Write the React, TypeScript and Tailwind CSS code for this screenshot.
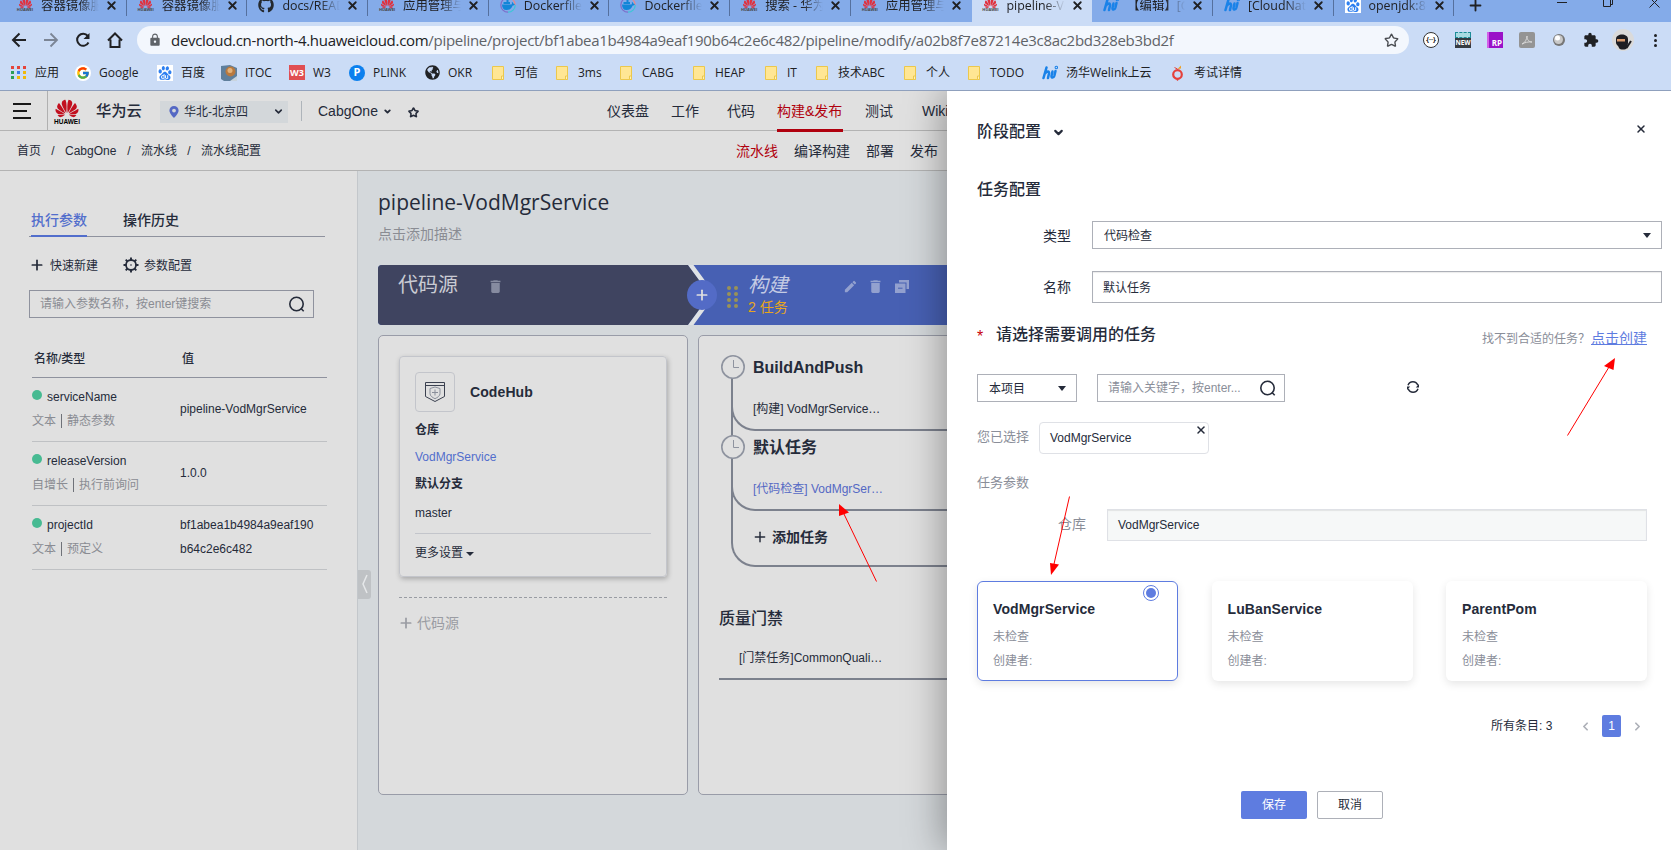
import type { ReactNode } from 'react';
import { ChevronDown, ChevronLeft, ChevronRight, Plus, Star, X } from 'lucide-react';
import { FcGoogle } from 'react-icons/fc';
import { FaGithub, FaGlobeAmericas } from 'react-icons/fa';
import { MdDelete, MdEdit, MdExtension, MdLock } from 'react-icons/md';
import { SiBaidu, SiHuawei } from 'react-icons/si';

/* ---------- small icons ---------- */

function HuaweiMark() {
  return (
    <span className="flex w-4 flex-col items-center">
      <SiHuawei className="h-[13px] w-[15px] text-[#e0313e]" />
      <span className="-mt-[2px] text-[4px] leading-[4px] font-bold text-[#444]">HUAWEI</span>
    </span>
  );
}

function DockerMark() {
  return (
    <svg className="h-4 w-4" viewBox="0 0 16 16" fill="none">
      <path d="M8 .8A7.200 7.200 0 0 0 8 15.200" stroke="#7d6fc9" strokeWidth="1.200" />
      <path d="M8 .8A7.200 7.200 0 0 1 15.200 8" stroke="#e88a8a" strokeWidth="1.200" />
      <path d="M15.200 8A7.200 7.200 0 0 1 8 15.200" stroke="#3cc6d6" strokeWidth="1.200" />
      <path d="M2 7.500h9.500c.6-.3.6-1.500.3-2.500 1 .3 1.500 1 1.600 1.800.6 0 1.100.1 1.500.4-.4.900-1.300 1.200-2.200 1.200C11.500 11.500 9.500 13 6.500 13 3.500 13 2 11 2 7.500z" fill="#1286d8" />
      <path d="M3.500 5h6.500v2H3.500zM6.500 3h2v2h-2z" fill="#1286d8" />
    </svg>
  );
}

function WelinkMark() {
  return (
    <svg className="h-4 w-4" viewBox="0 0 16 16" fill="none" stroke="#1a82e8" strokeWidth="2.500" strokeLinecap="round">
      <path d="M4.500 2.500L1.500 13M3.500 8c1.500-2 4-2 3.500.5L6 13" />
      <path d="M10.500 6.500L9.500 11c-.3 2 2.200 2 2.800 0l1.200-5" />
      <circle cx="14.300" cy="2.500" r=".5" />
    </svg>
  );
}

function BaiduMark() {
  return (
    <span className="flex h-4 w-4 items-center justify-center bg-white">
      <SiBaidu className="h-[14px] w-[14px] text-[#2d7ff0]" />
    </span>
  );
}

function Folder() {
  return (
    <svg className="h-4 w-4" viewBox="0 0 16 16">
      <path d="M2.500 1.500h11v13h-11z" fill="#ffe694" stroke="#ecc84c" />
      <path d="M11.500 11v3.500h2V11z" fill="#fff0b8" stroke="#ecc84c" />
    </svg>
  );
}

function AppsGrid() {
  const colors = ['#e5443a', '#e5443a', '#e5443a', '#2c9e56', '#3a7de8', '#f0b90b', '#2c9e56', '#f0b90b', '#f0b90b'];
  return (
    <span className="grid h-4 w-4 grid-cols-3 place-content-center gap-[2px]">
      {colors.map((c, i) => (
        <span key={i} className="h-[3px] w-[3px]" style={{ background: c }} />
      ))}
    </span>
  );
}

function SearchIcon() {
  return (
    <svg className="h-4 w-4" viewBox="0 0 16 16" fill="none" stroke="currentColor" strokeWidth="1.600">
      <circle cx="7.500" cy="8" r="6.700" />
      <path d="M11.800 12.300l2.900 2.900" />
    </svg>
  );
}

function Gear() {
  return (
    <svg className="h-4 w-4" viewBox="0 0 16 16" fill="none" stroke="currentColor">
      <circle cx="8" cy="8" r="5" strokeWidth="1.800" />
      <path
        d="M8 .5V3M8 13v2.500M.5 8H3M13 8h2.500M2.700 2.700l1.800 1.800M11.500 11.500l1.800 1.800M2.700 13.300l1.800-1.800M11.500 4.500l1.800-1.800"
        strokeWidth="1.900"
      />
      <circle cx="8" cy="8" r=".8" fill="currentColor" stroke="none" />
    </svg>
  );
}

function Caret() {
  return (
    <svg className="h-[5px] w-2" viewBox="0 0 8 5">
      <path d="M0 0h8L4 5z" fill="#252b3a" />
    </svg>
  );
}

function Clock() {
  return (
    <svg className="h-6 w-6" viewBox="0 0 24 24" fill="#e0e0e0" stroke="#8e939f">
      <circle cx="12" cy="12" r="11.200" strokeWidth="1.600" />
      <path d="M12.500 5v7.500h5.500" fill="none" />
    </svg>
  );
}

function CopyStage() {
  return (
    <svg className="h-[13px] w-[14px]" viewBox="0 0 14 13" fill="currentColor">
      <path d="M4 0h10v9h-2.500V2.500H4z" />
      <path d="M0 3.500h10.500V13H0z" />
      <path d="M3 8.200h4.500" stroke="#4760b3" />
    </svg>
  );
}

/* ---------- browser chrome ---------- */

interface Tab {
  icon: ReactNode;
  title: string;
  active?: boolean;
  noLine?: boolean;
}

const TABS: Tab[] = [
  { icon: <HuaweiMark />, title: '容器镜像服务' },
  { icon: <HuaweiMark />, title: '容器镜像服务' },
  { icon: <FaGithub className="h-4 w-4 text-[#24292f]" />, title: 'docs/README' },
  { icon: <HuaweiMark />, title: '应用管理与运维' },
  { icon: <DockerMark />, title: 'Dockerfile' },
  { icon: <DockerMark />, title: 'Dockerfile' },
  { icon: <HuaweiMark />, title: '搜索 - 华为云' },
  { icon: <HuaweiMark />, title: '应用管理与运维', noLine: true },
  { icon: <HuaweiMark />, title: 'pipeline-Vod', active: true, noLine: true },
  { icon: <WelinkMark />, title: '【编辑】[Cloud' },
  { icon: <WelinkMark />, title: '[CloudNative' },
  { icon: <BaiduMark />, title: 'openjdk:8-jre' },
];

const BOOKMARKS: { icon: ReactNode; label: string; width: string }[] = [
  { icon: <AppsGrid />, label: '应用', width: 'w-6' },
  {
    icon: (
      <span className="flex h-4 w-4 items-center justify-center rounded-full bg-white">
        <FcGoogle className="h-[14px] w-[14px]" />
      </span>
    ),
    label: 'Google',
    width: 'w-[42px]',
  },
  { icon: <BaiduMark />, label: '百度', width: 'w-6' },
  {
    icon: (
      <svg className="h-4 w-4" viewBox="0 0 16 16">
        <path d="M0 1l9-1 7 3v13H3L0 14z" fill="#5f7f9c" />
        <path d="M9 16l7-5v5z" fill="#c9d4de" />
        <circle cx="9.500" cy="6.500" r="5" fill="#b9793e" />
        <circle cx="9" cy="5.500" r="2.500" fill="#e3b27a" />
      </svg>
    ),
    label: 'ITOC',
    width: 'w-7',
  },
  {
    icon: (
      <span className="flex h-[15px] w-4 items-center justify-center bg-[#e04e52] text-[9px] font-bold text-white">W3</span>
    ),
    label: 'W3',
    width: 'w-5',
  },
  {
    icon: (
      <span className="flex h-4 w-4 items-center justify-center rounded-full bg-[#0c80ee] text-[11px] font-bold text-white">
        P
      </span>
    ),
    label: 'PLINK',
    width: 'w-[35px]',
  },
  { icon: <FaGlobeAmericas className="h-[15px] w-[15px] text-[#202124]" />, label: 'OKR', width: 'w-[26px]' },
  { icon: <Folder />, label: '可信', width: 'w-6' },
  { icon: <Folder />, label: '3ms', width: 'w-6' },
  { icon: <Folder />, label: 'CABG', width: 'w-[33px]' },
  { icon: <Folder />, label: 'HEAP', width: 'w-8' },
  { icon: <Folder />, label: 'IT', width: 'w-[11px]' },
  { icon: <Folder />, label: '技术ABC', width: 'w-12' },
  { icon: <Folder />, label: '个人', width: 'w-6' },
  { icon: <Folder />, label: 'TODO', width: 'w-9' },
  { icon: <WelinkMark />, label: '汤华Welink上云', width: 'w-[88px]' },
  {
    icon: (
      <svg className="h-4 w-4" viewBox="0 0 16 16" fill="none">
        <circle cx="7.500" cy="9.500" r="4.300" stroke="#e5403b" strokeWidth="2.200" />
        <path d="M6 14.500L7.500 16 9 14.500" fill="#e5403b" />
        <path d="M7.500 4L11 .5v3z" fill="#f0a020" />
        <path d="M4.500 2.500L7.500 4" stroke="#e5403b" />
      </svg>
    ),
    label: '考试详情',
    width: 'w-12',
  },
];

function TabStrip() {
  return (
    <div className="flex h-[22px] items-start overflow-hidden bg-[#84abe9] pl-[6px]">
      {TABS.map((t, i) => (
        <div
          key={i}
          className={`flex h-[22px] w-[120.7px] shrink-0 items-start pl-[11px] ${t.active ? 'bg-[#cbdcf6]' : 'bg-[#84abe9]'} ${
            i === 7 ? 'rounded-br-lg' : ''
          } ${i === 9 ? 'rounded-bl-lg' : ''}`}
        >
          <span className="-mt-[3px] h-4 w-4 shrink-0">{t.icon}</span>
          <span
            className="-mt-[4px] ml-2 w-[58px] overflow-hidden whitespace-nowrap text-[12.4px] leading-5 text-[#202124] [mask-image:linear-gradient(to_right,black_65%,transparent)]"
          >
            {t.title}
          </span>
          <X className="-mt-[1px] ml-[6px] h-[13px] w-[13px] shrink-0 text-[#202124]" strokeWidth={3.4} />
          <span className={`ml-auto h-4 w-px ${t.noLine ? '' : 'bg-[#55709e]'}`} />
        </div>
      ))}
      <Plus className="-mt-[3px] ml-[13px] h-[17px] w-[17px] text-[#202124]" strokeWidth={2.6} />
      <div className="ml-[73px] flex items-start text-[#202124]">
        <span className="mt-[2px] h-px w-[10px] bg-[#202124]" />
        <svg className="ml-[36px] h-2 w-[10px]" viewBox="0 0 10 8" fill="none" stroke="currentColor">
          <path d="M.5 0v6.500h7V0M7.500 4.500h2V0" />
        </svg>
        <svg className="ml-[36px] h-2 w-[11px]" viewBox="0 0 11 8" stroke="currentColor">
          <path d="M.5 7.500L8 0M10.500 7.500L3 0" />
        </svg>
      </div>
    </div>
  );
}

function AddressBar() {
  return (
    <div className="flex h-9 items-center bg-[#cbdcf6]">
      <div className="flex w-[137px] items-center gap-4 pl-[11px] text-[#202124]">
        <svg className="h-4 w-4" viewBox="0 0 16 16" fill="none" stroke="currentColor" strokeWidth="2">
          <path d="M15 8H2M8.500 1.500L2 8l6.500 6.500" />
        </svg>
        <svg className="h-4 w-4" viewBox="0 0 16 16" fill="none" stroke="#7b8595" strokeWidth="1.800">
          <path d="M1 8h13M7.500 1.500L14 8l-6.500 6.500" />
        </svg>
        <svg className="h-4 w-4" viewBox="0 0 16 16" fill="none" stroke="currentColor" strokeWidth="2">
          <path d="M13.500 10.500A6 6 0 1 1 12.800 4" />
          <path d="M14.500 1v6h-6z" fill="currentColor" stroke="none" />
        </svg>
        <svg className="h-4 w-4" viewBox="0 0 16 16" fill="none" stroke="currentColor" strokeWidth="2">
          <path d="M1 8.500L8 1.500l7 7M3.500 7.500V15h9V7.500" />
        </svg>
      </div>
      <div className="flex h-7 w-[1272px] items-center rounded-full bg-[#f3f7fd] pr-[10px] pl-[11px]">
        <MdLock className="h-[14px] w-[14px] text-[#5f6368]" />
        <span className="ml-[9px] text-[15px] tracking-[-0.300px] whitespace-nowrap text-[#5f6368]">
          <span className="text-[#202124]">devcloud.cn-north-4.huaweicloud.com</span>
          /pipeline/project/bf1abea1b4984a9eaf190b64c2e6c482/pipeline/modify/a02b8f7e87214e3c8ac2bd328eb3bd2f
        </span>
        <Star className="ml-auto h-[15px] w-[15px] text-[#4a4d52]" strokeWidth={2.2} />
      </div>
      <div className="flex items-center gap-4 pl-[14px]">
        <span className="flex h-4 w-4 items-center justify-center rounded-full border border-[#333] bg-white text-[7px] font-bold text-[#222]">
          {'{··}'}
        </span>
        <span className="flex h-4 w-4 flex-col">
          <span className="h-[6px] border border-dashed border-[#1e8c98] bg-[#a9dbe2]" />
          <span className="flex h-[10px] items-center justify-center bg-[#363b42] text-[6.500px] font-bold text-white">NEW</span>
        </span>
        <span className="flex h-4 w-4 items-end justify-end border-l-2 border-[#d35ee8] bg-[#9a12c8] pr-[1px] text-[8px] leading-[10px] font-bold text-white">
          RP
        </span>
        <svg className="h-4 w-4" viewBox="0 0 16 16">
          <rect width="16" height="16" rx="2" fill="#949494" />
          <path d="M3 12c3-1 5-5 5-8 0 4 2 6 5 6-4-.500-7 .5-10 2z" fill="none" stroke="#d8d8d8" />
        </svg>
        <svg className="h-4 w-4" viewBox="0 0 16 16">
          <circle cx="8" cy="8" r="6" fill="#777" />
          <circle cx="7.500" cy="7.500" r="4.500" fill="#c9c9c9" />
          <circle cx="6.500" cy="6" r="2.500" fill="#fff" />
        </svg>
        <MdExtension className="h-4 w-4 text-[#202124]" />
        <svg className="-mx-[3px] h-[22px] w-[22px]" viewBox="0 0 22 22">
          <circle cx="11" cy="11" r="11" fill="#dadada" />
          <path d="M4 10c0-6 12-6 12 0v4c0 2-1 3-1 5-1 2-7 2-8 0 0-2-3-3-3-5z" fill="#1d1d22" />
          <rect x="5" y="10" width="8" height="2.500" fill="#d99a6c" />
          <path d="M14.500 19l4.500-7" stroke="#1d1d22" strokeWidth="2" />
        </svg>
        <span className="flex w-4 flex-col items-center gap-[2px]">
          <span className="h-[3px] w-[3px] rounded-full bg-[#202124]" />
          <span className="h-[3px] w-[3px] rounded-full bg-[#202124]" />
          <span className="h-[3px] w-[3px] rounded-full bg-[#202124]" />
        </span>
      </div>
    </div>
  );
}

function BookmarkBar() {
  return (
    <div className="flex h-[33px] items-center gap-4 border-b border-[#8fa0bd] bg-[#cbdcf6] pb-[3px] pl-[11px]">
      {BOOKMARKS.map((b) => (
        <div key={b.label} className="flex shrink-0 items-center gap-2">
          <span className="flex h-4 w-4 items-center justify-center">{b.icon}</span>
          <span className={`text-[12px] leading-4 whitespace-nowrap text-[#202124] ${b.width}`}>{b.label}</span>
        </div>
      ))}
    </div>
  );
}

/* ---------- page ---------- */

function TopNav() {
  return (
    <div className="flex h-10 items-center border-b border-[#b3b3b3] bg-[#e0e0e0] text-[14px] whitespace-nowrap text-[#252b3a]">
      <div className="flex h-full w-[48px] flex-col justify-center gap-[5px] border-r border-[#b0b0b0] pl-[13px]">
        <span className="h-[2px] w-[18px] bg-[#191919]" />
        <span className="h-[2px] w-[14px] bg-[#191919]" />
        <span className="h-[2px] w-[18px] bg-[#191919]" />
      </div>
      <div className="ml-[5px] flex w-[28px] flex-col items-center">
        <SiHuawei className="h-[23px] w-[28px] text-[#c2101f]" />
        <span className="-mt-[1px] text-[6.500px] leading-[6px] font-bold text-black">HUAWEI</span>
      </div>
      <span className="mt-[2px] ml-[15px] w-[47px] text-[15.300px] font-medium">华为云</span>
      <div className="mt-[2px] ml-[17px] flex h-[22px] w-[128px] items-center bg-[#d3d7da] pl-[9px] text-[12px]">
        <svg className="h-3 w-[10px]" viewBox="0 0 10 12">
          <path d="M5 0a4.600 4.600 0 0 1 4.600 4.600C9.600 8 5 12 5 12S.4 8 .4 4.600A4.600 4.600 0 0 1 5 0z" fill="#5468c4" />
          <circle cx="5" cy="4.600" r="1.900" fill="#d3d7da" />
        </svg>
        <span className="ml-[5px]">华北-北京四</span>
        <ChevronDown className="mr-1 ml-auto h-[11px] w-[11px]" strokeWidth={3.500} />
      </div>
      <span className="ml-[13px] h-5 w-px bg-[#aeb4ba]" />
      <span className="mt-[1px] ml-4 w-[61px]">CabgOne</span>
      <ChevronDown className="mt-[1px] ml-1 h-[9px] w-[9px]" strokeWidth={5} />
      <Star className="mt-1 ml-[16px] h-[11px] w-[11px]" strokeWidth={3.400} />
      <div className="mt-[2px] flex h-10 items-center">
        <span className="ml-[188px] w-[42px]">仪表盘</span>
        <span className="ml-[22px] w-[28px]">工作</span>
        <span className="ml-[28px] w-[28px]">代码</span>
        <span className="flex h-10 w-[66px] items-center border-b-[3px] border-[#b0000e] pt-[2px] text-[#b0000e] ml-[22px]">
          构建&amp;发布
        </span>
        <span className="ml-[22px] w-[28px]">测试</span>
        <span className="ml-[29px]">Wiki</span>
      </div>
    </div>
  );
}

function SubNav() {
  return (
    <div className="flex h-10 items-center border-b border-[#b3b3b3] bg-[#e0e0e0] pl-[17px] text-[12px] whitespace-nowrap text-[#252b3a]">
      <div className="flex w-[719px] items-center">
        <span className="w-6">首页</span>
        <span className="w-6 text-center">/</span>
        <span className="w-[52px]">CabgOne</span>
        <span className="w-6 text-center">/</span>
        <span className="w-9">流水线</span>
        <span className="w-6 text-center">/</span>
        <span>流水线配置</span>
      </div>
      <div className="mt-[1px] flex items-center gap-4 text-[14px]">
        <span className="text-[#b0000e]">流水线</span>
        <span>编译构建</span>
        <span>部署</span>
        <span>发布</span>
      </div>
    </div>
  );
}

const PARAMS = [
  { name: 'serviceName', kind: '文本', mode: '静态参数', value: ['pipeline-VodMgrService'] },
  { name: 'releaseVersion', kind: '自增长', mode: '执行前询问', value: ['1.0.0'] },
  { name: 'projectId', kind: '文本', mode: '预定义', value: ['bf1abea1b4984a9eaf190', 'b64c2e6c482'] },
];

function ParamsPanel() {
  return (
    <aside className="h-full w-[358px] shrink-0 border-r border-[#c3c7cb] bg-[#e0e0e0] pt-9 pl-[29px] text-[12px] text-[#252b3a]">
      <div className="flex h-[30px] w-[296px] border-b border-[#8f929e] pl-[2px] text-[14px] font-medium">
        <span className="h-[30px] w-[56px] border-b-2 border-[#526ecc] leading-[26px] whitespace-nowrap text-[#526ecc]">执行参数</span>
        <span className="ml-9 leading-[26px]">操作历史</span>
      </div>

      <div className="mt-[18px] flex h-5 items-center">
        <Plus className="h-4 w-4" strokeWidth={2.600} />
        <span className="ml-[5px] w-12 pt-[2px]">快速新建</span>
        <span className="ml-[25px]">
          <Gear />
        </span>
        <span className="ml-[5px] pt-[2px]">参数配置</span>
      </div>

      <div className="mt-[15px] flex h-7 w-[285px] items-center border border-[#8f929e] pr-[8px] pl-[10px] text-[#8a8c93]">
        <span>请输入参数名称，按enter键搜索</span>
        <span className="ml-auto text-[#252b3a]">
          <SearchIcon />
        </span>
      </div>

      <div className="mt-[27px] ml-[3px] w-[295px]">
        <div className="flex h-[33px] border-b border-[#8f929e] pl-[2px] leading-[28px] font-medium">
          <span className="w-[148px]">名称/类型</span>
          <span>值</span>
        </div>
        {PARAMS.map((p) => (
          <div key={p.name} className="flex h-16 items-center border-b border-[#bfc1c4] pb-[2px] leading-6">
            <div className="w-[148px]">
              <div className="flex items-center">
                <span className="mr-[5px] mb-[3px] h-[10px] w-[10px] rounded-full bg-[#47ba92]" />
                {p.name}
              </div>
              <div className="flex items-center text-[#8a8c93]">
                <span>{p.kind}</span>
                <span className="mx-[5px] h-[14px] w-px bg-[#6f7279]" />
                <span>{p.mode}</span>
              </div>
            </div>
            <div>
              {p.value.map((v) => (
                <div key={v}>{v}</div>
              ))}
            </div>
          </div>
        ))}
      </div>
    </aside>
  );
}

function StageHeader() {
  return (
    <div className="relative mt-[21px] flex h-[60px] w-[620px] overflow-hidden rounded-[4px] bg-[#4760b3]">
      <div className="flex w-[310px] items-start bg-[#3f4460] pt-[5px] pl-[20px]">
        <span className="w-[60px] text-[20px] leading-[30px] text-[#c9cbd3]">代码源</span>
        <MdDelete className="mt-[8px] ml-[29px] h-[17px] w-[17px] text-[#868ba0]" />
      </div>
      <svg className="h-[60px] w-7" viewBox="0 0 28 60">
        <path d="M0 0l22 30L0 60z" fill="#3f4460" />
        <path d="M0 0h5.500l22 30-22 30H0l22-30z" fill="#dfe2e4" />
      </svg>
      <div className="ml-[11px] grid h-[20px] w-[11px] grid-cols-2 content-between gap-x-[3px] pt-[21px]">
        {[0, 1, 2, 3, 4, 5, 6, 7].map((n) => (
          <span key={n} className="mb-[2px] h-[4px] w-[4px] rounded-full bg-[#9a9256]" />
        ))}
      </div>
      <div className="ml-[10px] w-[80px] pt-[5px]">
        <div className="text-[20px] leading-[30px] text-[#c4cbe4] italic">构建</div>
        <div className="-mt-[3px] text-[14px] leading-[20px] text-[#e8a61c]">2 任务</div>
      </div>
      <div className="ml-[15px] flex items-start gap-[10px] pt-[14px] text-[#93a1cf]">
        <MdEdit className="h-[15px] w-[15px]" />
        <MdDelete className="-mt-px -ml-px h-[17px] w-[17px]" />
        <span className="mt-[1px] ml-[1px]">
          <CopyStage />
        </span>
      </div>
      <span className="absolute top-[15px] left-[309px] flex h-[30px] w-[30px] items-center justify-center rounded-full bg-[#536bc6] text-[#e0e0e0]">
        <Plus className="h-4 w-4" strokeWidth={2.600} />
      </span>
    </div>
  );
}

function SourceColumn() {
  return (
    <div className="h-[460px] w-[310px] shrink-0 rounded-[5px] border border-[#999ca8] bg-[#e0e0e0] px-5 pt-5 text-[12px] text-[#252b3a]">
      <div className="flex h-[221px] flex-col rounded-[4px] border border-[#c3c5cb] px-[15px] pt-[15px] shadow-[1px_2px_5px_rgba(0,0,0,0.25)]">
        <div className="flex h-10 items-center">
          <span className="flex h-10 w-10 items-center justify-center rounded-[4px] border border-[#c3c5cb]">
            <svg className="h-5 w-5" viewBox="0 0 20 20" fill="none" stroke="#3b4150">
              <path d="M.5.500h19v14L10 19.500.5 14.500zM.5 3.500h19" />
              <path d="M10 5l5 1.500v5c0 2.500-2.500 4-5 5.200-2.500-1.200-5-2.700-5-5.200v-5zM10 7.500v6M7 10.500h6" stroke="#8a8f9b" />
            </svg>
          </span>
          <span className="ml-[15px] text-[14px] font-bold tracking-[0.1px]">CodeHub</span>
        </div>
        <span className="mt-[8px] h-5 leading-5 font-bold">仓库</span>
        <span className="mt-[7px] h-5 leading-5 text-[#526ecc]">VodMgrService</span>
        <span className="mt-[7px] h-5 leading-5 font-bold">默认分支</span>
        <span className="mt-[9px] h-5 leading-5">master</span>
        <span className="mt-[10px] h-px bg-[#c3c5cb]" />
        <span className="mt-[9px] flex h-5 items-center gap-[3px] leading-5">
          更多设置
          <svg className="mt-[2px] h-1 w-2" viewBox="0 0 8 4">
            <path d="M0 0h8L4 4z" fill="#252b3a" />
          </svg>
        </span>
      </div>
      <div className="mt-[20px] border-t border-dashed border-[#999ca3]" />
      <div className="mt-[15px] flex h-5 items-center gap-[3px] text-[14px] text-[#9a9ca3]">
        <Plus className="-ml-px h-4 w-4" strokeWidth={2.600} />
        代码源
      </div>
    </div>
  );
}

function TaskRow({ title, task, selected }: { title: string; task: string; selected?: boolean }) {
  return (
    <div className="-ml-[2px] h-20">
      <div className="flex h-[64px] flex-col rounded-bl-[24px] border-b-2 border-l-2 border-[#7c818d]">
        <div className="-mt-3 -ml-[12px] flex h-6 items-center">
          <Clock />
          <span className="ml-[8px] pt-[2px] text-[16px] font-bold whitespace-nowrap">{title}</span>
        </div>
        <div className={`mt-[20px] ml-[20px] h-5 leading-5 whitespace-nowrap ${selected ? 'text-[#5468c4]' : ''}`}>{task}</div>
      </div>
    </div>
  );
}

function BuildColumn() {
  return (
    <div className="h-[460px] w-[310px] shrink-0 rounded-[5px] border border-[#999ca8] bg-[#e0e0e0] pt-[31px] pl-[20px] text-[12px] text-[#252b3a]">
      <div className="ml-[12px] h-[200px] rounded-bl-[24px] border-b-2 border-l-2 border-[#7c818d]">
        <TaskRow title="BuildAndPush" task="[构建] VodMgrService…" />
        <TaskRow title="默认任务" task="[代码检查] VodMgrSer…" selected />
        <div className="flex h-5 items-center pl-[19px]">
          <Plus className="h-4 w-4" strokeWidth={2.200} />
          <span className="ml-[4px] pt-[1px] text-[14px] font-bold">添加任务</span>
        </div>
      </div>
      <div className="mt-[40px] h-6 text-[16px] leading-6 font-medium">质量门禁</div>
      <div className="mt-[17px] h-[32px] border-b-2 border-[#7c818d] pl-[20px] leading-5">[门禁任务]CommonQuali…</div>
    </div>
  );
}

const JOBS = ['VodMgrService', 'LuBanService', 'ParentPom'];

function TaskDrawer() {
  return (
    <section className="absolute top-0 left-[947px] h-[759px] w-[724px] bg-white pt-6 pl-[30px] text-[12px] whitespace-nowrap text-[#252b3a] shadow-[-4px_0_36px_rgba(0,0,0,0.35)]">
      <div className="flex h-8 items-center text-[16px] font-medium">
        <span className="pt-[2px]">阶段配置</span>
        <ChevronDown className="mt-[2px] ml-[11px] h-[13px] w-[13px]" strokeWidth={4} />
        <X className="mr-[24px] mb-1 ml-auto h-3 w-3" strokeWidth={3} />
      </div>
      <h2 className="mt-[31px] h-6 text-[16px] leading-6 font-medium">任务配置</h2>

      <div className="mt-[19px] flex h-7 items-center">
        <span className="w-[94px] pt-[2px] text-right text-[14px]">类型</span>
        <div className="ml-[21px] flex h-7 w-[570px] items-center justify-between border border-[#adb0b8] pr-[10px] pl-[11px]">
          <span className="pt-[2px]">代码检查</span>
          <Caret />
        </div>
      </div>
      <div className="mt-[22px] flex h-8 items-center">
        <span className="w-[94px] text-right text-[14px]">名称</span>
        <div className="ml-[21px] flex h-8 w-[570px] items-center border border-[#adb0b8] pl-[10px] pt-[2px] shadow-[inset_0_1px_1px_rgba(0,0,0,0.08)]">
          默认任务
        </div>
      </div>

      <div className="mt-[19px] flex h-6 items-center">
        <span className="w-[19px] pt-[5px] text-[16px] text-[#c7000b]">*</span>
        <span className="pt-[2px] text-[16px] font-medium">请选择需要调用的任务</span>
        <span className="mt-[8px] mr-[24px] ml-auto flex items-center text-[#8a8e99]">
          <span className="w-[109px] pt-[1px]">找不到合适的任务？</span>
          <a className="text-[14px] text-[#5e7ce0] underline">点击创建</a>
        </span>
      </div>

      <div className="mt-[28px] flex h-7 items-center">
        <div className="flex h-7 w-[100px] items-center justify-between border border-[#adb0b8] pr-[10px] pl-[11px]">
          <span className="pt-[1px]">本项目</span>
          <Caret />
        </div>
        <div className="ml-5 flex h-7 w-[188px] items-center justify-between border border-[#adb0b8] pr-[8px] pl-[10px]">
          <span className="text-[#8a8e99]">请输入关键字，按enter...</span>
          <SearchIcon />
        </div>
        <svg className="mb-[2px] ml-[122px] h-3 w-3" viewBox="0 0 12 12" fill="none" stroke="#252b3a" strokeWidth="1.400">
          <path d="M1 4.200A5.200 5.200 0 0 1 10.800 4.200M11 7.800A5.200 5.200 0 0 1 1.200 7.800" />
          <path d="M12 3v3.500H8.800zM0 9V5.500h3.200z" fill="#252b3a" stroke="none" />
        </svg>
      </div>

      <div className="mt-5 flex h-8 items-center">
        <span className="mb-[3px] w-[62px] text-[13px] text-[#8a8e99]">您已选择</span>
        <div className="flex h-8 w-[170px] items-center justify-between rounded-[4px] border border-[#dfe1e6] pl-[10px]">
          VodMgrService
          <X className="mr-[1px] mb-4 h-3 w-3" strokeWidth={3} />
        </div>
      </div>
      <div className="mt-[19px] h-5 text-[13px] leading-5 text-[#8a8e99]">任务参数</div>
      <div className="mt-4 flex h-8 items-center">
        <span className="mb-[2px] w-[109px] text-right text-[14px] text-[#8a8e99]">仓库</span>
        <div className="ml-[21px] flex h-8 w-[540px] items-center border border-[#dfe1e6] bg-[#f6f8f8] pl-[10px] shadow-[inset_0_1px_1px_rgba(0,0,0,0.08)]">
          VodMgrService
        </div>
      </div>

      <div className="mt-10 flex w-[670px] justify-between">
        {JOBS.map((job, i) => (
          <div
            key={job}
            className={`relative h-[100px] w-[201px] rounded-[6px] border pt-[17px] pl-[15px] shadow-[0_3px_8px_rgba(0,0,0,0.1)] ${
              i === 0 ? 'border-[#5e7ce0]' : 'border-transparent'
            }`}
          >
            <div className="h-5 text-[14px] leading-5 font-bold tracking-[0.1px]">{job}</div>
            <div className="mt-[8px] h-5 leading-5 text-[#8a8e99]">未检查</div>
            <div className="mt-[4px] h-5 leading-5 text-[#8a8e99]">创建者:</div>
            {i === 0 && (
              <span className="absolute top-[3px] right-[18px] flex h-4 w-4 items-center justify-center rounded-full border border-[#5e7ce0]">
                <span className="h-[10px] w-[10px] rounded-full bg-[#5e7ce0]" />
              </span>
            )}
          </div>
        ))}
      </div>

      <div className="mt-[34px] flex h-[22px] items-center justify-end pr-[27px]">
        <span className="mb-[1px] w-[63px]">所有条目: 3</span>
        <ChevronLeft className="ml-[25px] h-[13px] w-[13px] text-[#adb0b8]" strokeWidth={3.200} />
        <span className="ml-[10px] flex h-[22px] w-[19px] items-center justify-center rounded-[2px] bg-[#5e7ce0] text-white">1</span>
        <ChevronRight className="ml-[10px] h-[13px] w-[13px] text-[#adb0b8]" strokeWidth={3.200} />
      </div>

      <div className="mt-[54px] flex gap-[10px] pl-[264px]">
        <button className="h-7 w-[66px] rounded-[2px] bg-[#5e7ce0] text-white">保存</button>
        <button className="h-7 w-[66px] rounded-[2px] border border-[#adb0b8]">取消</button>
      </div>
    </section>
  );
}

// Red pointers drawn on top of the page
function Pointers() {
  return (
    <svg className="pointer-events-none absolute top-0 left-0 h-[850px] w-[1671px]" viewBox="0 0 1671 850" stroke="#f00" fill="#f00">
      <path d="M876.500 581.500L843 512" />
      <path d="M839 504l10 8.500-10 3.500z" stroke="none" />
      <path d="M1567.500 435.500L1609 367" />
      <path d="M1615 358l-11 8 9.500 4z" stroke="none" />
      <path d="M1069.500 496.500L1054 564" />
      <path d="M1050 563l9 1.500-8 10.500z" stroke="none" />
    </svg>
  );
}

export default function App() {
  return (
    <div className="relative h-[850px] w-[1671px] overflow-hidden bg-[#d4d8db] font-['Liberation_Sans','Noto_Sans_CJK_SC',sans-serif]">
      <header className="font-['Open_Sans','Noto_Sans_CJK_SC',sans-serif]">
        <TabStrip />
        <AddressBar />
        <BookmarkBar />
      </header>

      <div className="relative h-[759px] overflow-hidden">
        <TopNav />
        <SubNav />
        <div className="flex h-[679px]">
          <ParamsPanel />
          <div className="flex w-[13px] shrink-0 items-center pt-[147px]">
            <span className="flex h-[29px] w-[13px] items-center justify-center rounded-r-[3px] bg-[#bfc2c5]">
              <svg className="h-5 w-[6px]" viewBox="0 0 6 20" fill="none" stroke="#e6e8ea" strokeWidth="1.500">
                <path d="M5 1L1 10l4 9" />
              </svg>
            </span>
          </div>
          <main className="w-[640px] shrink-0 pt-4 pl-[7px]">
            <h1 className="h-[30px] font-['Open_Sans',sans-serif] text-[21px] leading-[30px] text-[#252b3a]">
              pipeline-VodMgrService
            </h1>
            <p className="mt-[7px] h-5 text-[14px] leading-5 text-[#8a8c93]">点击添加描述</p>
            <StageHeader />
            <div className="mt-[10px] flex gap-[10px]">
              <SourceColumn />
              <BuildColumn />
            </div>
          </main>
        </div>
        <TaskDrawer />
      </div>
      <Pointers />
    </div>
  );
}
